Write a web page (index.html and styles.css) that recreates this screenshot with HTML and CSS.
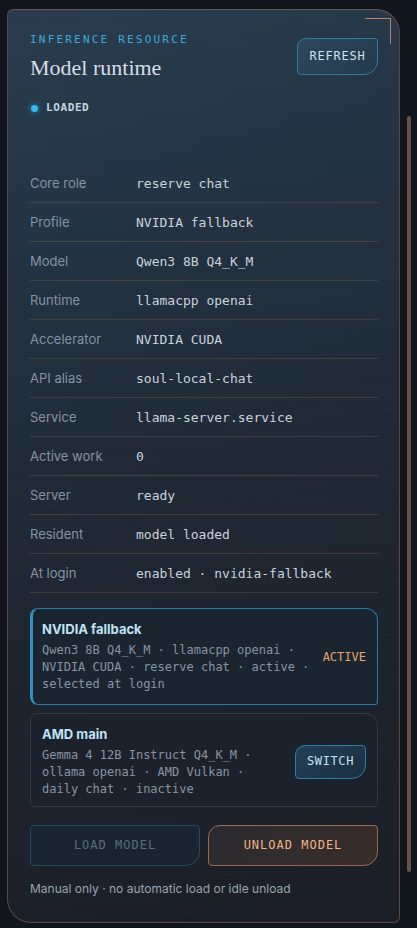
FILE: index.html
```html
<!DOCTYPE html>
<html lang="en">
<head>
    <meta charset="UTF-8">
    <meta name="viewport" content="width=device-width, initial-scale=1.0">
    <title>Model runtime</title>
    <link rel="stylesheet" href="styles.css">
</head>
<body>
    <section class="panel">
        <span class="corner"></span>

        <!-- Header -->
        <div class="panel-head">
            <div>
                <div class="eyebrow">INFERENCE RESOURCE</div>
                <h1 class="title">Model runtime</h1>
            </div>
            <button class="btn btn-refresh">REFRESH</button>
        </div>
        <div class="status"><span class="dot"></span>LOADED</div>

        <!-- Runtime facts -->
        <dl class="facts">
            <div class="row"><dt>Core role</dt><dd>reserve chat</dd></div>
            <div class="row"><dt>Profile</dt><dd>NVIDIA fallback</dd></div>
            <div class="row"><dt>Model</dt><dd>Qwen3 8B Q4_K_M</dd></div>
            <div class="row"><dt>Runtime</dt><dd>llamacpp openai</dd></div>
            <div class="row"><dt>Accelerator</dt><dd>NVIDIA CUDA</dd></div>
            <div class="row"><dt>API alias</dt><dd>soul-local-chat</dd></div>
            <div class="row"><dt>Service</dt><dd>llama-server.service</dd></div>
            <div class="row"><dt>Active work</dt><dd>0</dd></div>
            <div class="row"><dt>Server</dt><dd>ready</dd></div>
            <div class="row"><dt>Resident</dt><dd>model loaded</dd></div>
            <div class="row"><dt>At login</dt><dd>enabled · nvidia-fallback</dd></div>
        </dl>

        <!-- Profiles -->
        <div class="profiles">
            <div class="profile active">
                <div class="profile-text">
                    <div class="profile-name">NVIDIA fallback</div>
                    <div class="profile-meta">Qwen3 8B Q4_K_M · llamacpp openai · NVIDIA CUDA · reserve chat · active · selected at login</div>
                </div>
                <span class="profile-state">ACTIVE</span>
            </div>
            <div class="profile">
                <div class="profile-text">
                    <div class="profile-name">AMD main</div>
                    <div class="profile-meta">Gemma 4 12B Instruct Q4_K_M · ollama openai · AMD Vulkan · daily chat · inactive</div>
                </div>
                <button class="btn btn-switch">SWITCH</button>
            </div>
        </div>

        <div class="actions">
            <button class="btn btn-load" disabled>LOAD MODEL</button>
            <button class="btn btn-unload">UNLOAD MODEL</button>
        </div>

        <p class="note">Manual only · no automatic load or idle unload</p>
    </section>

    <div class="scroll-thumb"></div>
</body>
</html>
```

FILE: styles.css
```css
body {
    margin: 0;
    background: #11151e;
    font-family: Inter, "Noto Sans", sans-serif;
    color: #c9d3dc;
}
.panel {
    position: relative;
    margin: 9px 17px 8px 7px;
    padding: 23px 21px 25px 22px;
    border: 1px solid #5a4840;
    border-top-color: #6e5344;
    border-radius: 6px 24px 6px 24px;
    background:
        repeating-linear-gradient(0deg, rgba(255, 255, 255, 0.012) 0 1px, transparent 1px 3px),
        linear-gradient(165deg, #293c4e 0%, #22303e 30%, #1d242e 65%, #1a1d26 100%);
}
.corner {
    position: absolute;
    top: 8px;
    right: 8px;
    width: 25px;
    height: 25px;
    border-top: 1px solid #b3846a;
    border-right: 1px solid #b3846a;
}
.panel-head {
    display: flex;
    justify-content: space-between;
    align-items: flex-start;
}
.eyebrow {
    font-family: "DejaVu Sans Mono", monospace;
    font-size: 11px;
    line-height: 14px;
    letter-spacing: 2.2px;
    color: #38a9dd;
}
.title {
    margin: 8px 0 0;
    font-family: "Liberation Serif", serif;
    font-weight: normal;
    font-size: 22px;
    line-height: 26px;
    color: #d7dee5;
}
.btn {
    font-family: "DejaVu Sans Mono", monospace;
    font-size: 12px;
    line-height: 15px;
    letter-spacing: 0.6px;
    cursor: pointer;
}
.btn-refresh {
    margin-top: 5px;
    width: 81px;
    height: 37px;
    padding: 0;
    border: 1px solid #2e7ca6;
    border-radius: 9px 3px 14px 4px;
    background: linear-gradient(135deg, #2d475c, #243a4c);
    color: #cfe2ec;
    letter-spacing: 0.8px;
}
.status {
    display: flex;
    align-items: center;
    gap: 8px;
    margin-top: 20px;
    font-family: "DejaVu Sans Mono", monospace;
    font-weight: bold;
    font-size: 11px;
    line-height: 14px;
    letter-spacing: 0.6px;
    color: #c4d6de;
}
.dot {
    width: 7px;
    height: 7px;
    margin-left: 1px;
    border-radius: 50%;
    background: #30b9f2;
    box-shadow: 0 0 6px rgba(48, 185, 242, 0.7);
}
.facts {
    margin: 49px 0 0;
}
.row {
    display: grid;
    grid-template-columns: 106px 1fr;
    align-items: center;
    height: 38px;
    border-bottom: 1px solid rgba(120, 96, 84, 0.38);
}
.row dt {
    font-size: 13px;
    color: #8693a1;
}
.row dd {
    margin: 0;
    font-family: "DejaVu Sans Mono", monospace;
    font-size: 13px;
    color: #c9d3dc;
}
.profiles {
    display: flex;
    flex-direction: column;
    gap: 8px;
    margin-top: 15px;
}
.profile {
    display: flex;
    align-items: center;
    gap: 12px;
    padding: 11px 11px 8px 11px;
    border: 1px solid #343941;
    border-radius: 6px 12px 3px 5px;
    background: #1c222b;
}
.profile.active {
    padding: 11px 11px 11px 9px;
    border-color: #2a7ba4;
    border-left: 3px solid #2f90c2;
    border-radius: 8px 12px 3px 8px;
    background: #1b2530;
}
.profile-text {
    flex: 1;
}
.profile-name {
    font-weight: bold;
    font-size: 13px;
    line-height: 18px;
    color: #bfe3f5;
}
.profile-meta {
    margin-top: 4px;
    font-family: "DejaVu Sans Mono", monospace;
    font-size: 12px;
    line-height: 17px;
    color: #8894a0;
}
.profile-state {
    font-family: "DejaVu Sans Mono", monospace;
    font-size: 12px;
    color: #e6a26e;
}
.btn-switch {
    height: 34px;
    padding: 0 11px;
    border: 1px solid #2d7fa6;
    border-radius: 10px 4px 14px 4px;
    background: linear-gradient(135deg, #21405a, #1c2f3e);
    color: #c2e1f1;
}
.actions {
    display: grid;
    grid-template-columns: 1fr 1fr;
    gap: 8px;
    margin-top: 18px;
}
.actions .btn {
    height: 41px;
    letter-spacing: 1px;
}
.btn-load {
    border: 1px solid #1f4b63;
    border-radius: 4px 4px 14px 4px;
    background: #1a2430;
    color: #5a6e7c;
    cursor: default;
}
.btn-unload {
    border: 1px solid #9c6a51;
    border-radius: 12px 4px 14px 4px;
    background: linear-gradient(135deg, #2a2a2f, #3a2d29);
    color: #f0b386;
}
.note {
    margin: 15px 0 0;
    font-size: 12px;
    line-height: 16px;
    color: #98a5ad;
}
.scroll-thumb {
    position: absolute;
    top: 116px;
    left: 407px;
    width: 4px;
    height: 756px;
    border-radius: 2px;
    background: #6a5245;
}
```
